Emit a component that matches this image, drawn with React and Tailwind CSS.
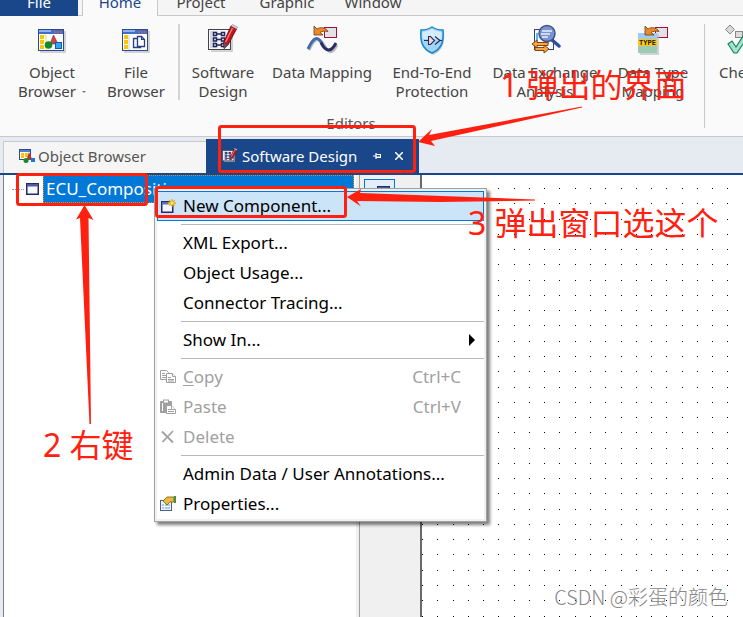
import { useState } from "react";

const RED = "#ff2010";

/* ---------- ribbon icons (32 x 32) ---------- */

function BrowserFrame({ children }) {
    return (
        <svg viewBox="0 0 32 32" className="w-8 h-8" aria-hidden="true">
            <rect x="4" y="7" width="26" height="22" fill="#b8b8b8" opacity=".6" />
            <rect x="2.5" y="5.5" width="25" height="21" fill="#fff" stroke="#2b4a94" />
            <rect x="3" y="6" width="24" height="4" fill="#3f6fc8" />
            <rect x="3" y="6" width="12" height="2" fill="#8fb2ea" />
            <path d="M18 8h2M21 8h2M24 8h2" stroke="#e05a3a" strokeWidth="1.5" />
            <path d="M4 11h4v4H4zM4 16h4v4H4zM4 21h4v4H4z" fill="#ffc400" />
            {children}
        </svg>
    );
}

function ObjectBrowserIcon() {
    return (
        <BrowserFrame>
            <path d="M8 11h2v15" stroke="#ffd84a" fill="none" />
            <path d="M17.5 11l4.5 9h-8z" fill="#c84848" stroke="#8a2020" strokeWidth=".6" />
            <circle cx="12.5" cy="21" r="3.8" fill="#168a2a" />
            <rect x="19.5" y="18.5" width="6" height="6" fill="#2fa8f8" stroke="#1458b0" />
        </BrowserFrame>
    );
}

function FileBrowserIcon() {
    return (
        <BrowserFrame>
            <path d="M9 11v15" stroke="#c8d4ea" fill="none" />
            <path d="M13.5 14.5h7v9h-7z" fill="#eef2fb" stroke="#2b3f80" strokeWidth="1.3" />
            <path d="M17.5 12.5h4l3 3v7h-7z" fill="#fff" stroke="#2b3f80" strokeWidth="1.3" />
            <path d="M21.5 12.5v3h3" fill="none" stroke="#2b3f80" strokeWidth="1.2" />
        </BrowserFrame>
    );
}

function SoftwareDesignIcon({ className = "w-8 h-8" }) {
    return (
        <svg viewBox="0 0 32 32" className={className} aria-hidden="true">
            <path d="M4 7h22v21H4z" fill="#b8b8b8" opacity=".6" />
            <rect x="1.5" y="5.5" width="22" height="20" fill="#f6f6fa" stroke="#444" />
            <rect x="3" y="7" width="6" height="17" fill="#d8dae2" />
            <g fill="#fff" stroke="#22265e" strokeWidth="1.5">
                <path d="M9 10h6M9 15.5h6M9 21h6" />
                <rect x="6.5" y="8.5" width="3" height="3" />
                <rect x="6.5" y="14" width="3" height="3" />
                <rect x="6.5" y="19.5" width="3" height="3" />
                <rect x="14.5" y="8.5" width="3" height="3" />
                <rect x="14.5" y="14" width="3" height="3" />
                <rect x="14.5" y="19.5" width="3" height="3" />
            </g>
            <path d="M24 2l5.5 3-8.500 16-4 3.500-.5-6z" fill="#c4141c" stroke="#5e0a12" strokeWidth=".8" />
            <path d="M25.500 4l-7 14" stroke="#f47a70" strokeWidth="1.5" />
            <path d="M16.500 18.500l4.500 2.500-4 4z" fill="#5a5468" />
            <path d="M24 2l1.500-1.500 5 2.500-1 2z" fill="#d8d8e0" stroke="#666" strokeWidth=".5" />
        </svg>
    );
}

function OrangeArrow() {
    return (
        <path
            d="M8 2v9h9l-3-2.500c2-1.500 5-1.500 8-1C20 3.500 14.500 2.500 11 5z"
            fill="#e88a2c"
            stroke="#7a3a08"
            strokeWidth=".8"
        />
    );
}

function DataMappingIcon() {
    return (
        <svg viewBox="0 0 32 32" className="w-8 h-8" aria-hidden="true">
            <rect x="18.5" y="3.5" width="12" height="10" fill="#e2e2e6" stroke="#a01038" />
            <OrangeArrow />
            <path d="M3 26C9 13 13 13 18 21s8 10 13 0" fill="none" stroke="#bbb" strokeWidth="3" />
            <path d="M2 25C8 12 12 12 16 20" fill="none" stroke="#4468b0" strokeWidth="3" />
            <path d="M15 18.5c5 10 10 10 15 .5" fill="none" stroke="#2b2d62" strokeWidth="3" />
        </svg>
    );
}

function ShieldIcon() {
    return (
        <svg viewBox="0 0 32 32" className="w-8 h-8" aria-hidden="true">
            <path d="M17 4c3 2 6 3 11 3 1 12-1 20-11 24C7 27 5 18 6 7c5 0 8-1 11-3z" fill="#aaa" opacity=".6" />
            <path d="M16 3c3 2 6 3 11 3 1 11-1 19-11 23C6 25 4 17 5 6c5 0 8-1 11-3z" fill="#a4d4f4" stroke="#1484d4" strokeWidth="1.5" />
            <path d="M16 5c3 2 6 2.500 9.500 3 .5 3 0 5-.5 7H7c-.5-2-1-4-.5-7C10 7.500 13 7 16 5z" fill="#d4ecfc" />
            <path d="M8 16.500h4M19 12.500l5 4-5 4M24 16.500h2" fill="none" stroke="#222a60" strokeWidth="1.1" />
            <path d="M12.500 12.500h2l4 4-4 4h-2z" fill="#f0dcd0" stroke="#222a60" strokeWidth="1.1" />
        </svg>
    );
}

function DataExchangeIcon() {
    return (
        <svg viewBox="0 0 32 32" className="w-8 h-8" aria-hidden="true">
            <rect x="5.5" y="5.5" width="19" height="20" fill="#fff" stroke="#2b3f80" />
            <path d="M8 9v10h12" stroke="#5ab4f4" strokeWidth="2" fill="none" />
            <path d="M23 16l7 6" stroke="#2c50a0" strokeWidth="3.5" strokeLinecap="round" />
            <circle cx="18" cy="9.500" r="8" fill="#7d93d0" stroke="#44518a" strokeWidth="1.5" />
            <path d="M13 7h10M12 10h9M13 13h6" stroke="#e8f0ff" strokeWidth="1.3" />
            <path d="M3 20l5-4v2.500h11v3H8V24z" fill="#f4a848" stroke="#8a4208" />
            <path d="M20 25l-5 4v-2.500H6v-3h9V21z" fill="#f4a848" stroke="#8a4208" />
        </svg>
    );
}

function DataTypeIcon() {
    return (
        <svg viewBox="0 0 32 32" className="w-8 h-8" aria-hidden="true">
            <rect x="18.5" y="3.5" width="12" height="10" fill="#e2e2e6" stroke="#a01038" />
            <path d="M3 10h19v21H3z" fill="#b8b8b8" opacity=".6" />
            <rect x="1" y="9" width="19" height="6" fill="#9accfc" />
            <rect x="1" y="15" width="19" height="7" fill="#ffc814" />
            <rect x="1" y="22" width="19" height="7" fill="#9cccb4" />
            <text x="10.500" y="21" textAnchor="middle" fontSize="7" fontWeight="700" fontFamily="Liberation Mono, monospace" fill="#222">TYPE</text>
            <OrangeArrow />
        </svg>
    );
}

function CheckIcon() {
    return (
        <svg viewBox="0 0 32 32" className="w-8 h-8" aria-hidden="true">
            <path d="M5 1l4.500 4.500L5 10 .5 5.500z" fill="#d8d8d8" stroke="#888" />
            <rect x="10.500" y="7.500" width="7" height="6" fill="#ddd" stroke="#888" />
            <path d="M3 20l4-3 4 6 9-14 4 2-12 18h-3z" fill="#a4e4cc" stroke="#148060" strokeWidth="1.2" />
        </svg>
    );
}

/* ---------- small icons ---------- */

function TabObjectIcon() {
    return (
        <svg viewBox="0 0 16 16" className="w-4 h-4" aria-hidden="true">
            <rect x=".5" y=".5" width="11" height="10" fill="#fff" stroke="#2b4a94" />
            <path d="M1 1h10v2H1z" fill="#4f7fd0" />
            <path d="M2 4h3v5H2zM6 4h3v4H6z" fill="#ffc400" />
            <path d="M10 3l3.500 8h-6z" fill="#b83838" />
            <circle cx="7" cy="11.500" r="2.500" fill="#168a2a" />
            <rect x="12" y="9" width="4" height="4" fill="#1c78d8" />
        </svg>
    );
}

function WindowIcon() {
    return (
        <svg viewBox="0 0 13 12" className="w-[13px] h-3" aria-hidden="true">
            <rect x=".75" y=".75" width="11.5" height="10.5" fill="#f6f8ff" stroke="#26286a" strokeWidth="1.5" />
            <rect x="1" y="1" width="11" height="2.5" fill="#4c5ca0" />
        </svg>
    );
}

function NewComponentIcon() {
    return (
        <svg viewBox="0 0 16 16" className="w-4 h-4" aria-hidden="true">
            <rect x="1.75" y="3.75" width="11" height="10.5" fill="#f4f6ff" stroke="#26286a" strokeWidth="1.5" />
            <rect x="2" y="4" width="7" height="2.500" fill="#5c70b8" />
            <path d="M12 1v8M8 5h8M9.200 2.200l5.600 5.600M14.800 2.200L9.200 7.800" stroke="#e8b414" strokeWidth="1.3" />
            <circle cx="12" cy="5" r="2" fill="#ffe880" stroke="#d89c00" strokeWidth=".6" />
        </svg>
    );
}

function CopyIcon() {
    return (
        <svg viewBox="0 0 16 16" className="w-4 h-4" fill="#fff" stroke="#a0a0a0" aria-hidden="true">
            <path d="M.5 1.500h6l2 2v7h-8z" />
            <path d="M2 4.500h3M2 6.500h4M2 8.500h4" />
            <path d="M6.500 4.500h6l3 3v6h-9z" />
            <path d="M12.500 4.500v3h3M8 8.500h3M8 10.500h6M8 12h6" />
        </svg>
    );
}

function PasteIcon() {
    return (
        <svg viewBox="0 0 16 16" className="w-4 h-4" fill="#fff" stroke="#a0a0a0" aria-hidden="true">
            <path d="M.5 2.500h11v11H.5z" fill="#a0a0a0" />
            <path d="M2.500 4v8" stroke="#fff" />
            <rect x="3.5" y="1" width="5" height="3" />
            <path d="M6.500 6.500h5l4 4v4h-9z" />
            <path d="M11.500 6.500v4h4M8 10.500h3M8 12.500h6" />
        </svg>
    );
}

function DeleteIcon() {
    return (
        <svg viewBox="0 0 16 16" className="w-4 h-4" fill="none" stroke="#a0a0a0" strokeWidth="1.8" aria-hidden="true">
            <path d="M2 2.500l11 11M13 2L2.500 13" />
        </svg>
    );
}

function PropertiesIcon() {
    return (
        <svg viewBox="0 0 16 16" className="w-4 h-4" aria-hidden="true">
            <rect x=".5" y="4.500" width="11" height="10" fill="#eaf4fc" stroke="#4a6088" />
            <path d="M2 9h2M5 9h5M2 12h2M5 12h5" stroke="#6e9cc8" />
            <path d="M3 5l4-4h7v5h-4l-3 3-2-2z" fill="#ecb93c" stroke="#7a5a10" strokeWidth=".8" />
            <rect x="14" y="0" width="2" height="7" fill="#3f9440" />
        </svg>
    );
}

/* ---------- ribbon ---------- */

function RibbonButton({ icon, lines, caret, width }) {
    return (
        <button type="button" className={`${width} shrink-0 flex flex-col items-center text-[15px] leading-[19px] text-[#444]`}>
            {icon}
            <span className="mt-[7px] whitespace-nowrap">{lines[0]}</span>
            {lines[1] && (
                <span className="flex items-center whitespace-nowrap">
                    {lines[1]}
                    {caret && <span className="ml-1.5 border-x-2 border-t-2 border-x-transparent border-t-[#777]" />}
                </span>
            )}
        </button>
    );
}

const browsers = [
    { lines: ["Object", "Browser"], icon: <ObjectBrowserIcon />, caret: true, width: "w-[84px]" },
    { lines: ["File", "Browser"], icon: <FileBrowserIcon />, width: "w-[84px]" },
];

const editors = [
    { lines: ["Software", "Design"], icon: <SoftwareDesignIcon />, width: "w-[86px]" },
    { lines: ["Data Mapping"], icon: <DataMappingIcon />, width: "w-28" },
    { lines: ["End-To-End", "Protection"], icon: <ShieldIcon />, width: "w-[108px]" },
    { lines: ["Data Exchange", "Analysis"], icon: <DataExchangeIcon />, width: "w-[118px]" },
    { lines: ["Data Type", "Mapping"], icon: <DataTypeIcon />, width: "w-[98px]" },
];

function Ribbon() {
    const tabs = ["Project", "Graphic", "Window"];

    return (
        <header className="bg-[#fafafa] border-b border-[#c6c8cc] overflow-hidden">
            <nav className="-mt-2 h-6 flex text-[15px] leading-5 bg-[#f5f5f5] text-[#444] overflow-hidden">
                <button type="button" className="w-[78px] flex justify-center bg-[#1a478a] text-white">File</button>
                <span className="w-1 border-b border-[#c6c8cc]" />
                <button type="button" className="w-[76px] flex justify-center border-x border-[#c6c8cc] bg-[#fafafa] text-[#1a478a]">Home</button>
                <div className="flex-1 flex border-b border-[#c6c8cc]">
                    {tabs.map((tab) => (
                        <button key={tab} type="button" className="w-[86px] flex justify-center">{tab}</button>
                    ))}
                </div>
            </nav>
            <div className="flex h-30">
                <section className="shrink-0 flex flex-col">
                    <div className="flex pl-2.5 pt-2">
                        {browsers.map((b) => <RibbonButton key={b.lines[0]} {...b} />)}
                        <div className="w-0.5 h-[76px] bg-[#d4d4d4] shrink-0" />
                        {editors.map((b) => <RibbonButton key={b.lines[0]} {...b} />)}
                    </div>
                    <h2 className="mt-auto pb-[3px] text-center text-[15px] leading-[19px] text-[#555]">Editors</h2>
                </section>
                <div className="w-px shrink-0 my-2 ml-0.5 mr-2 bg-[#c6c8cc]" />
                <div className="pt-2">
                    <button type="button" className="flex flex-col items-start text-[15px] leading-[19px] text-[#444]">
                        <span className="pl-3"><CheckIcon /></span>
                        <span className="mt-[7px] pl-1.5">Check</span>
                    </button>
                </div>
            </div>
        </header>
    );
}

function DocumentTabs() {
    return (
        <div className="h-[38px] pl-[3px] pt-0.5 flex shrink-0 items-stretch bg-[#e6eaf1] border-b-2 border-[#1a478a] text-[15px] text-[#555]">
            <button type="button" className="mt-0.5 w-[203px] pl-[15px] pb-0.5 flex items-center gap-[3px] bg-[#f5f5f5] border-l border-t border-[#c6c8cc]">
                <TabObjectIcon />
                Object Browser
            </button>
            <div className="w-[213px] px-4 flex items-center bg-[#1a478a] text-white">
                <button type="button" className="flex items-center gap-1 whitespace-nowrap">
                    <SoftwareDesignIcon className="w-4 h-4" />
                    Software Design
                </button>
                <button type="button" aria-label="Pin" className="ml-auto">
                    <svg viewBox="0 0 8 8" className="w-2 h-2" fill="none" stroke="#fff"><path d="M0 4h3M3 1v6M3 2.500h4.500v3H3M3 5h5" strokeWidth="1.2" /></svg>
                </button>
                <button type="button" aria-label="Close" className="ml-3.5">
                    <svg viewBox="0 0 8 8" className="w-2 h-2" stroke="#fff" strokeWidth="1.5"><path d="M0 0l8 8M8 0L0 8" /></svg>
                </button>
            </div>
        </div>
    );
}

/* ---------- context menu ---------- */

const groups = [
    [{ label: "New Component...", icon: <NewComponentIcon /> }],
    [{ label: "XML Export..." }, { label: "Object Usage..." }, { label: "Connector Tracing..." }],
    [{ label: "Show In...", submenu: true }],
    [
        { label: "Copy", icon: <CopyIcon />, keys: "Ctrl+C", disabled: true, underline: true },
        { label: "Paste", icon: <PasteIcon />, keys: "Ctrl+V", disabled: true },
        { label: "Delete", icon: <DeleteIcon />, disabled: true },
    ],
    [{ label: "Admin Data / User Annotations..." }, { label: "Properties...", icon: <PropertiesIcon /> }],
];

function ContextMenu() {
    const [active, setActive] = useState("New Component...");

    return (
        <div role="menu" className="absolute left-[154px] top-[188px] w-[333px] p-0.5 bg-[#f0f0f0] border border-[#a0a0a0] shadow-[3px_3px_3px_rgba(0,0,0,0.5)]">
            <div className="bg-white">
                {groups.map((items, i) => (
                    <div key={i}>
                        {i > 0 && <div className="h-[7px] pt-[3px] pl-6"><div className="h-px bg-[#b8b8b8]" /></div>}
                        {items.map((item) => (
                            <button
                                key={item.label}
                                type="button"
                                role="menuitem"
                                disabled={item.disabled}
                                onMouseEnter={() => setActive(item.label)}
                                className={`w-full h-[30px] pl-0.5 pr-2 flex items-center border text-[17px] leading-7 whitespace-nowrap
                                    ${active === item.label ? "bg-[#cce4f7] border-[#0078d7]" : "border-transparent"}
                                    ${item.disabled ? "text-[#a0a0a0]" : "text-black"}`}
                            >
                                <span className="w-[23px] shrink-0">{item.icon}</span>
                                {item.underline
                                    ? <span><u className="underline-offset-2">{item.label[0]}</u>{item.label.slice(1)}</span>
                                    : item.label}
                                {item.keys && <span className="ml-auto pr-3.5">{item.keys}</span>}
                                {item.submenu && <span className="ml-auto border-y-[6px] border-l-[6px] border-y-transparent border-l-black" />}
                            </button>
                        ))}
                    </div>
                ))}
            </div>
        </div>
    );
}

/* ---------- workspace ---------- */

function DotGrid() {
    const step = 15.27;
    const dots = [];
    for (let row = 0; row < 60; row++) {
        for (let col = 0; col < 110; col++) {
            dots.push(`M${Math.round(col * step)} ${13 + Math.round(row * step)}h1v1h-1z`);
        }
    }
    return (
        <svg className="w-full h-full" shapeRendering="crispEdges" aria-hidden="true">
            <path d={dots.join("")} fill="#000" />
        </svg>
    );
}

function Workspace() {
    return (
        <main className="flex-1 min-h-0 flex pl-[3px] bg-[#e6eaf1]">
            <ul role="tree" className="w-[353px] shrink-0 bg-white border-l border-[#808080] text-[17px]">
                <li role="treeitem" className="flex items-center">
                    <span className="ml-2 w-3 border-t border-dotted border-[#999]" />
                    <span className="ml-0.5 mr-1"><WindowIcon /></span>
                    <span className="flex-1 mr-0.5 h-7 pl-0.5 leading-[26px] bg-[#0078d7] text-white border border-dotted border-[#e08820]">ECU_Composition</span>
                </li>
            </ul>
            <div className="w-[3px] shrink-0 bg-[#f0f0f0]" />
            <aside className="w-[63px] shrink-0 pl-1 pt-1 bg-[#f0f0f0] border-l border-r-2 border-l-[#a0a0a0] border-r-[#696969]">
                <button type="button" aria-label="Component" className="w-[31px] h-[31px] pt-1.5 pr-1 flex justify-end bg-[#e3eef8] border border-[#0078d7]">
                    <WindowIcon />
                </button>
            </aside>
            <div className="flex-1 min-w-0 overflow-hidden bg-white">
                <DotGrid />
            </div>
        </main>
    );
}

/* red marks drawn over the window */
function Annotations() {
    return (
        <div className="absolute inset-0 overflow-hidden pointer-events-none text-[32px] leading-10 whitespace-nowrap text-[#ff2010]">
            <svg className="absolute inset-0 w-full h-full" fill={RED} aria-hidden="true">
                <g fill="none" stroke={RED} strokeWidth="3">
                    <rect x="219.5" y="126.5" width="195" height="45" rx="2" />
                    <rect x="17.5" y="174.5" width="129" height="30" rx="2" />
                    <rect x="156.5" y="187.5" width="189" height="29" rx="2" />
                </g>
                <path d="M418 142L432 129L429 135L582 106.500V107.500L431 141L435 146z" />
                <path d="M84.500 205L93.500 220L88.500 218L91 424H89.500L80 218L76 219.500z" />
                <path d="M347 197L361 189L360 193L535 199.500V200.500L440 202L357 201L361 206.500z" />
            </svg>
            <span className="absolute left-[500px] top-[65px]">1 弹出的界面</span>
            <span className="absolute left-[43px] top-[425px]">2 右键</span>
            <span className="absolute left-[468px] top-[203px]">3 弹出窗口选这个</span>
        </div>
    );
}

export default function App() {
    return (
        <div className="relative h-screen flex flex-col overflow-hidden bg-white font-['Noto_Sans','Noto_Sans_CJK_SC',sans-serif]">
            <Ribbon />
            <DocumentTabs />
            <Workspace />
            <ContextMenu />
            <Annotations />
            <span className="absolute right-[15px] bottom-1.5 text-xl leading-7 font-light text-[#888] font-['Noto_Sans_CJK_SC',sans-serif]">
                CSDN @彩蛋的颜色
            </span>
        </div>
    );
}
